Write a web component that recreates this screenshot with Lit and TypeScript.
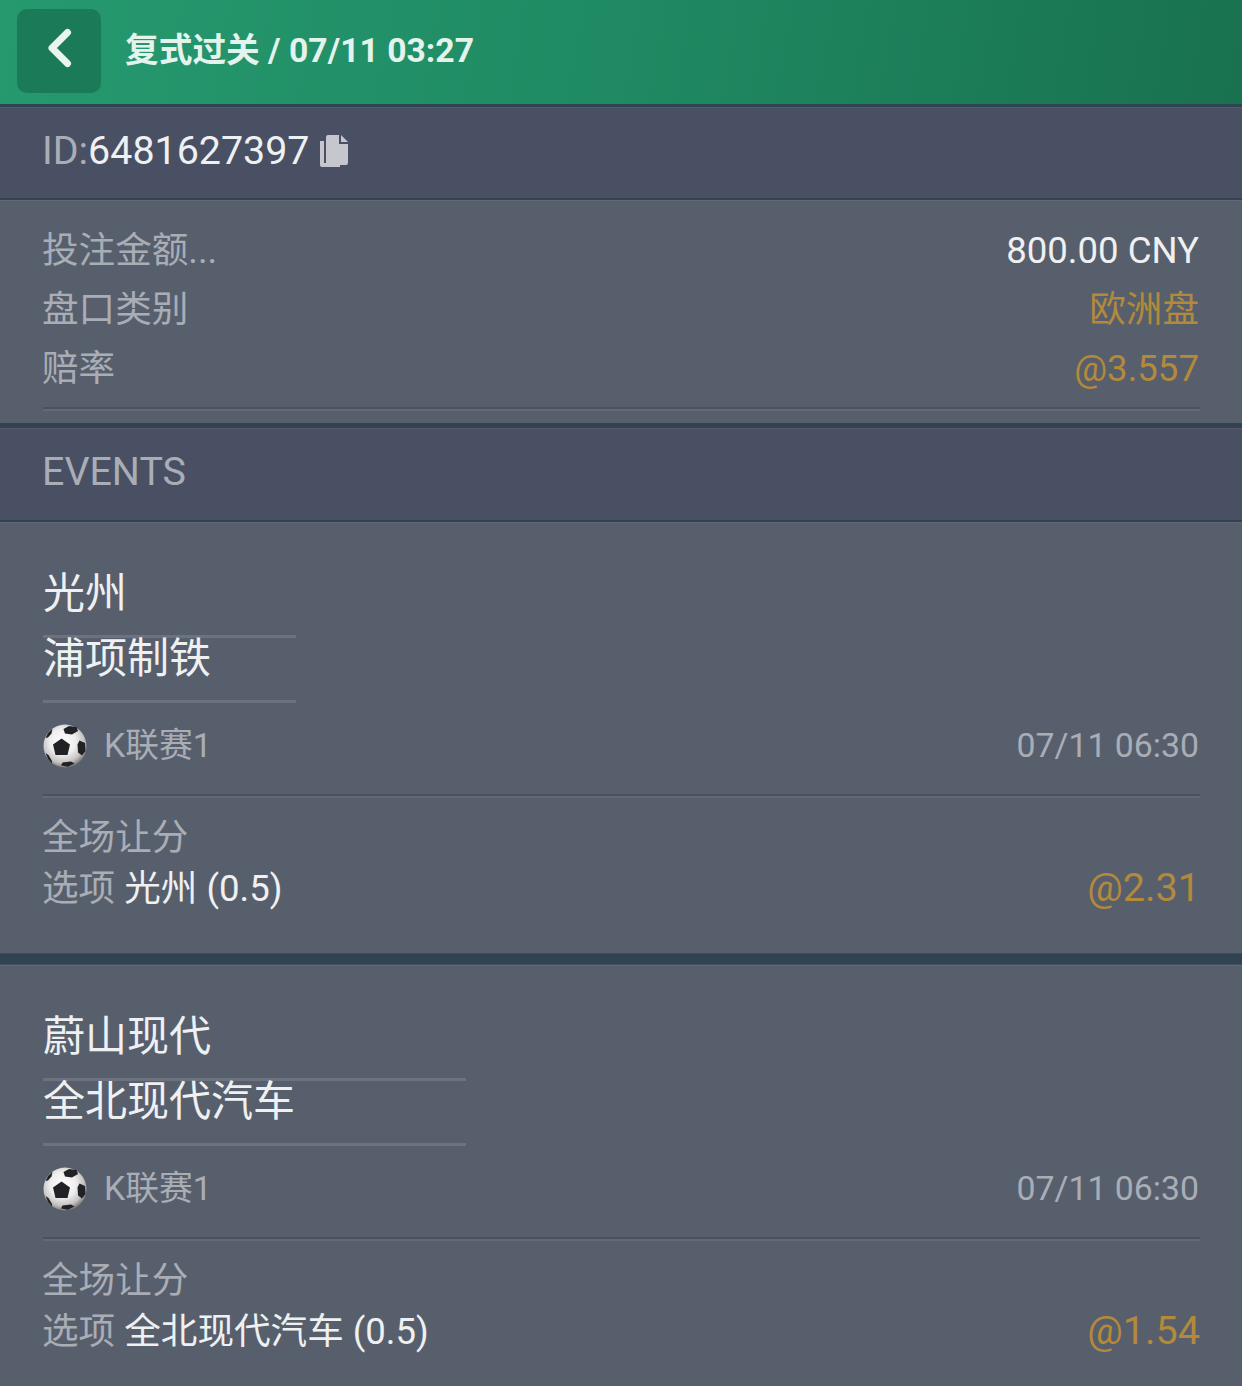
import { LitElement, html, css, svg } from 'lit';
import { customElement } from 'lit/decorators.js';

const ball = () => html`
  <svg class="ball" viewBox="0 0 44 44" width="44" height="44">
    <defs>
      <radialGradient id="shade" cx="45%" cy="40%" r="60%">
        <stop offset="0%" stop-color="#ffffff" />
        <stop offset="50%" stop-color="#eeeeee" />
        <stop offset="82%" stop-color="#c4c2c1" />
        <stop offset="100%" stop-color="#7f7c7b" />
      </radialGradient>
    </defs>
    <circle cx="22" cy="22" r="21.5" fill="url(#shade)" />
    ${svg`<g fill="#222226">
      <path d="M18.600 14.500L27 20.500l-2.500 10.500H12.500L10 20.500z" />
      <path d="M36.500 16.500l5.500 2.500.5 8-3.500 4.500-4-3-.5-8z" />
      <path d="M20.500 5l5.500-3 7.500 1 1.500 4-6 3.500-7-1z" />
      <path d="M18 41.500l1.500-3 8.500-1 3.500 2-6.500 3.300z" />
      <path d="M2.500 14L5 9l4.500-4.500-1 5L5 13.500z" />
      <path d="M2.500 29l3 2L9 37v2.500l-4-4.500z" />
    </g>`}
  </svg>
`;

interface EventData {
  home: string;
  away: string;
  nameWidth: number;
  pick: string;
  odds: string;
}

const events: EventData[] = [
  { home: '光州', away: '浦项制铁', nameWidth: 253, pick: '光州 (0.5)', odds: '@2.31' },
  { home: '蔚山现代', away: '全北现代汽车', nameWidth: 423, pick: '全北现代汽车 (0.5)', odds: '@1.54' },
];

@customElement('app-root')
export class AppRoot extends LitElement {
  static styles = css`
    :host {
      display: block;
      width: 1242px;
      height: 1386px;
      overflow: hidden;
      background: #585f6c;
      font-family: Roboto, 'Noto Sans CJK SC', sans-serif;
      color: #eef0f2;
    }

    /* top bar */
    .top {
      height: 104px;
      box-sizing: content-box;
      display: flex;
      align-items: center;
      gap: 24px;
      padding-left: 17px;
      background: linear-gradient(100deg, #26996f 0%, #1f8a63 50%, #19714f 100%);
      border-bottom: 3px solid #2f4451;
    }
    .back {
      width: 84px;
      height: 84px;
      margin-bottom: 2px;
      border-radius: 10px;
      background: #1b7a58;
      display: flex;
      align-items: center;
      justify-content: center;
    }
    .back svg {
      margin: 0 0 6px 2px;
    }
    .title {
      font-size: 33.700px;
      line-height: 44px;
      font-weight: 700;
      color: #e4f3ec;
      padding-bottom: 2px;
    }

    /* darker section headings */
    .bar {
      height: 91px;
      box-sizing: content-box;
      display: flex;
      align-items: center;
      padding-left: 42px;
      background: #4a5063;
      border-top: 1px solid #555b6d;
      font-size: 39.400px;
      line-height: 50px;
      color: #a9adb6;
    }
    .bar.id {
      gap: 10px;
      height: 86px;
      padding-bottom: 4px;
    }
    .bar.events {
      height: 85px;
      padding-bottom: 6px;
    }
    .bar .num {
      color: #eef0f2;
    }
    .bar-end {
      height: 2px;
      background: #314352;
    }

    /* bet summary */
    .summary {
      border-top: 1px solid #626875;
      padding: 20px 42px 0 43px;
      height: 202px;
      box-sizing: content-box;
    }
    .row {
      height: 59px;
      display: flex;
      align-items: baseline;
      justify-content: space-between;
      margin-left: -1px;
      padding-right: 1px;
      font-size: 36.600px;
      line-height: 59px;
      color: #a9adb6;
    }
    .val {
      color: #eef0f2;
    }
    .gold {
      color: #b3893c;
    }
    .rule {
      height: 4px;
      background: linear-gradient(#4b5160 0 2px, #636976 2px);
    }
    .summary .rule {
      margin-top: 9px;
    }
    .gap {
      height: 5px;
      background: #314352;
    }

    /* event card */
    .event {
      border-top: 1px solid #626875;
      padding: 45px 42px 0 43px;
      height: 385px;
      box-sizing: content-box;
    }
    .names {
      font-size: 42px;
    }
    .names .first {
      line-height: 52px;
      padding-bottom: 15px;
    }
    .names .second {
      line-height: 42px;
      padding-bottom: 20px;
    }
    .names .line {
      height: 3px;
      background: #6c7280;
    }
    .meta {
      display: flex;
      align-items: center;
      justify-content: space-between;
      height: 91px;
      box-sizing: border-box;
      padding: 0 1px 6px 0;
      font-size: 33.800px;
      line-height: 44px;
      color: #a9adb6;
    }
    .league {
      display: flex;
      align-items: center;
      gap: 17px;
    }
    .ball {
      display: block;
      filter: blur(0.4px);
    }
    .market {
      margin: 14px 0 0 -1px;
      font-size: 36.600px;
      line-height: 51px;
      color: #a9adb6;
    }
    .pick {
      display: flex;
      align-items: baseline;
      justify-content: space-between;
      height: 51px;
    }
    .pick b {
      font-weight: 400;
      color: #eef0f2;
    }
    .odds {
      font-size: 39.600px;
      line-height: 40px;
    }
    .divider {
      height: 12px;
      background: #314352;
      border-top: 1px solid #3f4a5a;
      border-bottom: 1px solid #454f5e;
      box-sizing: border-box;
    }
  `;

  renderEvent(e: EventData) {
    return html`
      <section class="event">
        <div class="names" style="width:${e.nameWidth}px">
          <div class="first">${e.home}</div>
          <div class="line"></div>
          <div class="second">${e.away}</div>
          <div class="line"></div>
        </div>
        <div class="meta">
          <span class="league">${ball()}<span>K联赛1</span></span>
          <span>07/11 06:30</span>
        </div>
        <div class="rule"></div>
        <div class="market">
          <div>全场让分</div>
          <div class="pick">
            <span>选项 <b>${e.pick}</b></span>
            <span class="gold odds">${e.odds}</span>
          </div>
        </div>
      </section>
    `;
  }

  render() {
    return html`
      <header class="top">
        <div class="back">
          <svg width="28" height="40" viewBox="0 0 28 40">
            <path d="M21.500 4.500L6 20l15.500 15.500" fill="none" stroke="#eaf5f0" stroke-width="7" stroke-linecap="round" stroke-linejoin="round" />
          </svg>
        </div>
        <div class="title">复式过关 / 07/11 03:27</div>
      </header>
      <div class="bar id">
        <span>ID:<span class="num">6481627397</span></span>
        <svg width="28" height="32" viewBox="0 0 28 32">
          <path d="M0 6h4v22h16v4H2a2 2 0 0 1-2-2z" fill="#c6c7ce" />
          <path d="M6 2a2 2 0 0 1 2-2h11v9h9v19a2 2 0 0 1-2 2H8a2 2 0 0 1-2-2z" fill="#c6c7ce" />
          <path d="M21 0l7 7h-7z" fill="#c6c7ce" />
        </svg>
      </div>
      <div class="bar-end"></div>
      <section class="summary">
        <div class="row"><span>投注金额...</span><span class="val">800.00 CNY</span></div>
        <div class="row"><span>盘口类别</span><span class="gold">欧洲盘</span></div>
        <div class="row"><span>赔率</span><span class="gold">@3.557</span></div>
        <div class="rule"></div>
      </section>
      <div class="gap"></div>
      <div class="bar events">EVENTS</div>
      <div class="bar-end"></div>
      ${this.renderEvent(events[0])}
      <div class="divider"></div>
      ${this.renderEvent(events[1])}
    `;
  }
}
